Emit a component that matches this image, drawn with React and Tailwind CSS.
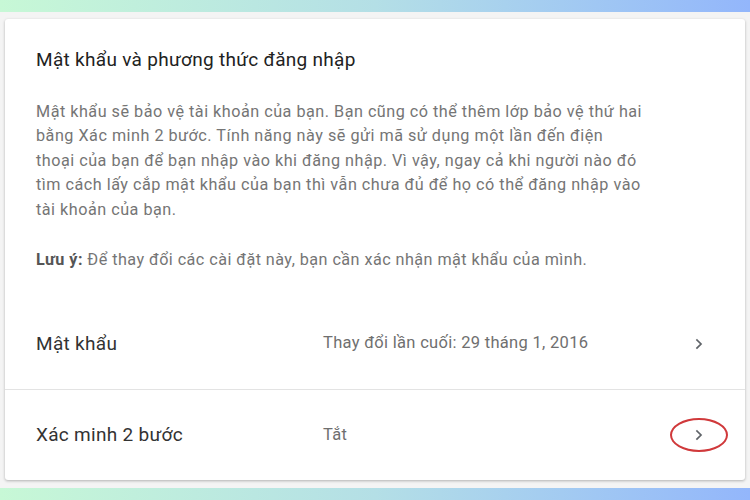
import React from 'react';

const intro = [
  'Mật khẩu sẽ bảo vệ tài khoản của bạn. Bạn cũng có thể thêm lớp bảo vệ thứ hai',
  'bằng Xác minh 2 bước. Tính năng này sẽ gửi mã sử dụng một lần đến điện',
  'thoại của bạn để bạn nhập vào khi đăng nhập. Vì vậy, ngay cả khi người nào đó',
  'tìm cách lấy cắp mật khẩu của bạn thì vẫn chưa đủ để họ có thể đăng nhập vào',
  'tài khoản của bạn.',
];

function Chevron() {
  return (
    <svg width="16" height="16" viewBox="0 0 24 24" fill="none" stroke="#5f6368" strokeWidth="2.6" strokeLinecap="square">
      <path d="M9 6l6 6-6 6" />
    </svg>
  );
}

function SettingRow({ label, value, marked, border }) {
  return (
    <div className={`flex items-center pl-[31px] pr-[38px] ${border ? 'h-[92px] border-b border-[#e3e3e3]' : 'h-[90px]'}`}>
      <div className="w-[287px] text-[19px] tracking-[0.3px] text-[#333]">{label}</div>
      <div className="flex-1 text-[16.5px] tracking-[0.3px] text-[#6f6f6f]">{value}</div>
      <div className="relative flex items-center justify-center w-4 h-4">
        <Chevron />
        {marked && (
          <span className="absolute left-1/2 top-1/2 -translate-x-1/2 -translate-y-1/2 w-[58px] h-[34px] rounded-[50%] border-2 border-[#d0393b]" />
        )}
      </div>
    </div>
  );
}

export default function App() {
  return (
    <div className="w-[750px] h-[500px] flex flex-col bg-[#f4f4f4] font-['Roboto','Liberation_Sans',sans-serif]">
      <div className="h-3 bg-gradient-to-r from-[#c7f8d6] via-[#b4dfe6] to-[#93b6fb]" />
      <div className="flex-1 px-[5px] pt-[7px] pb-2">
        <div className="h-full bg-white rounded-[3px] shadow-[0_1px_3px_rgba(0,0,0,0.28)] flex flex-col">
          <div className="pl-[31px] pt-[29px]">
            <h3 className="text-[19px] leading-6 tracking-[0.3px] text-[#222]">Mật khẩu và phương thức đăng nhập</h3>
            <p className="mt-[28px] text-[16.2px] leading-[24.5px] tracking-[0.5px] text-[#757575]">
              {intro.map((line, i) => (
                <span key={i} className="block whitespace-nowrap">{line}</span>
              ))}
            </p>
            <p className="mt-[26px] text-[16.2px] leading-6 tracking-[0.45px] text-[#757575]">
              <span className="font-bold text-[#555]">Lưu ý:</span> Để thay đổi các cài đặt này, bạn cần xác nhận mật khẩu của mình.
            </p>
          </div>
          <div className="mt-[26px]">
            <SettingRow label="Mật khẩu" value="Thay đổi lần cuối: 29 tháng 1, 2016" border />
            <SettingRow label="Xác minh 2 bước" value="Tắt" marked />
          </div>
        </div>
      </div>
      <div className="h-3 bg-gradient-to-r from-[#c7f8d6] via-[#b4dfe6] to-[#93b6fb]" />
    </div>
  );
}
